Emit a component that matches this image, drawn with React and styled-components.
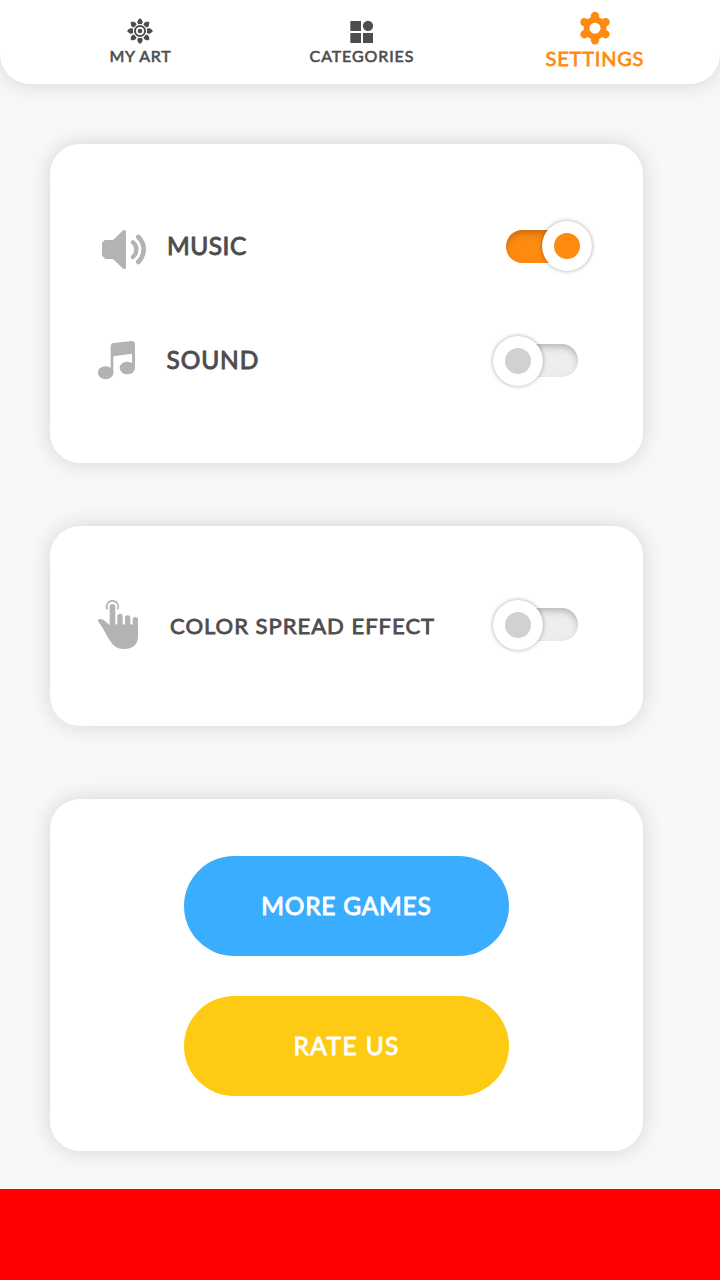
import React from "react";
import styled, { createGlobalStyle } from "styled-components";

const GlobalStyle = createGlobalStyle`
  *, *::before, *::after { box-sizing: border-box; }
  body { margin: 0; background: #f8f8f8; }
`;

const Screen = styled.div`
  display: flex;
  flex-direction: column;
  width: 720px;
  height: 1280px;
  overflow: hidden;
  background: #f8f8f8;
  color: #4d4d4d;
  font-family: Lato, "Liberation Sans", sans-serif;
  font-weight: 400;
`;

const NavBar = styled.nav`
  display: grid;
  grid-template-columns: 280px 163px 303px;
  flex: none;
  height: 84px;
  background: #fff;
  border-radius: 0 0 30px 30px;
  box-shadow: 0 0 22px rgba(0, 0, 0, 0.15);
`;

const NavItem = styled.a`
  display: flex;
  flex-direction: column;
  align-items: center;
  padding-top: ${(p) => (p.$active ? 11 : 18)}px;
  color: ${(p) => (p.$active ? "#ff8a12" : "#4d4d4d")};

  svg {
    display: block;
    flex: none;
    fill: currentColor;
  }
`;

const Caption = styled.span`
  font-size: ${(p) => p.$size}px;
  letter-spacing: ${(p) => p.$spacing}px;
  margin-right: -${(p) => p.$spacing}px;
  padding-top: ${(p) => p.$drop || 0}px;
  line-height: 24px;
  white-space: nowrap;
  -webkit-text-stroke: ${(p) => p.$size * 0.038}px currentColor;
`;

const Content = styled.main`
  flex: 1;
  padding: 60px 77px 0 50px;
`;

const Card = styled.section`
  height: ${(p) => p.$height}px;
  margin-bottom: ${(p) => p.$gap || 0}px;
  padding: ${(p) => p.$top}px 49px 0 48px;
  background: #fff;
  border-radius: 30px;
  box-shadow: 0 0 22px rgba(0, 0, 0, 0.15);
`;

const SettingRow = styled.div`
  display: flex;
  align-items: center;
  height: 113px;
  margin-bottom: 1px;

  > svg {
    display: block;
    flex: none;
    fill: #b3b3b3;
  }
`;

const RowLabel = styled(Caption)`
  flex: 1;
  margin-left: ${(p) => p.$indent}px;
  padding-bottom: ${(p) => p.$lift || 0}px;
`;

const Switch = styled.button`
  display: flex;
  align-items: center;
  flex: none;
  width: 72px;
  height: 33px;
  margin-right: 16px;
  padding: 0;
  border: 0;
  border-radius: 17px;
  background: ${(p) => (p.$on ? "#ff8a12" : "#ededed")};
  box-shadow: inset 0 4px 7px -1px rgba(0, 0, 0, 0.24);
`;

const Knob = styled.span`
  display: grid;
  place-items: center;
  flex: none;
  width: 50px;
  height: 50px;
  margin-left: ${(p) => (p.$on ? 36 : -13)}px;
  margin-top: ${(p) => (p.$on ? -1 : 1)}px;
  border-radius: 50%;
  background: #fff;
  box-shadow: 0 0 4px rgba(0, 0, 0, 0.35);

  &::after {
    content: "";
    width: 26px;
    height: 26px;
    border-radius: 50%;
    background: ${(p) => (p.$on ? "#ff8a12" : "#d1d1d1")};
  }
`;

const Actions = styled.div`
  display: flex;
  flex-direction: column;
  align-items: center;
  gap: 40px;
`;

const PillButton = styled.button`
  display: flex;
  align-items: center;
  justify-content: center;
  width: 325px;
  height: 100px;
  padding: 0;
  border: 0;
  border-radius: 50px;
  background: ${(p) => p.$color};
  color: #fff;
  font: inherit;
`;

const BottomBanner = styled.footer`
  flex: none;
  height: 91px;
  background: #f00;
`;

function FlowerIcon() {
  return (
    <svg width="26" height="26" viewBox="96 40 78 78">
      {[0, 45, 90, 135, 180, 225, 270, 315].map((a) => (
        <path
          key={a}
          d="M135 40.500C139 43 143.500 48 143 53C142 58 139 61 135 61C131 61 128 58 127 53C126.500 48 131 43 135 40.500Z"
          transform={`rotate(${a} 135 79)`}
        />
      ))}
      <circle cx="135" cy="79" r="21" fill="#fff" />
      <circle cx="135" cy="79" r="15" fill="none" stroke="currentColor" strokeWidth="6" />
      <circle cx="135" cy="79" r="7" />
    </svg>
  );
}

function CategoriesIcon() {
  return (
    <svg width="26" height="26" viewBox="147 39 78 78">
      <rect x="151" y="48" width="32" height="30" />
      <circle cx="204" cy="62.500" r="15.500" />
      <rect x="151" y="84" width="32" height="30" />
      <rect x="189" y="84" width="30" height="30" />
    </svg>
  );
}

function GearIcon() {
  return (
    <svg width="34" height="34" viewBox="129.500 33 102 102">
      {[0, 60, 120].map((a) => (
        <path
          key={a}
          d="M180.500 48V121"
          stroke="currentColor"
          strokeWidth="25"
          strokeLinecap="round"
          transform={`rotate(${a} 180.500 84.500)`}
        />
      ))}
      <circle cx="180.500" cy="84.500" r="34" />
      <circle cx="180.500" cy="84.500" r="16.500" fill="#fff" />
    </svg>
  );
}

function SpeakerIcon() {
  return (
    <svg width="50" height="51" viewBox="39 18 150 153">
      <path d="M61 75H82Q85 75 87 73L112 48Q117 43 121 46Q123 48 123 51V156Q123 160 120 162Q116 163 112 159L87 135Q84 132 81 132H63Q60 132 58 129L53 124Q51 122 51 119V87Q51 83 54 80Q57 75 61 75Z" />
      <g fill="none" stroke="#b3b3b3" strokeLinecap="round">
        <path d="M144 82Q154 90 154 103Q154 117 144 126" strokeWidth="13" />
        <path d="M160 66Q176 82 176 103Q176 125 160 141" strokeWidth="14" />
      </g>
    </svg>
  );
}

function NoteIcon() {
  return (
    <svg width="50" height="51" viewBox="39 15 150 153">
      <path d="M77 50Q77 40 87 39L140 33Q150 33 150 43V115H141V71L85 79V128H77Z" />
      <ellipse cx="62" cy="128" rx="23.500" ry="19.500" />
      <ellipse cx="127" cy="114" rx="23" ry="19" />
    </svg>
  );
}

function TouchIcon() {
  return (
    <svg width="50" height="51" viewBox="39 27 150 153">
      <path
        d="M67 58A17.500 17.500 0 1 1 98 58"
        fill="none"
        stroke="#b3b3b3"
        strokeWidth="5"
      />
      <path d="M74 106V51Q74 42 82.500 42Q91 42 91 51V102Q94 106 97 101V79Q97 71 105 71Q113 71 113 79V102Q116 107 120 102V84Q120 76 128 76Q136 76 136 84V102Q139 107 143 102V89Q143 81 151 81Q159 81 159 89V138Q159 157 147 168Q136 177 117 177Q94 177 82 162Q74 152 63 132Q57 120 49 108L40 95Q37 89 43 87Q52 86 60 93Z" />
    </svg>
  );
}

function Toggle({ on, label }) {
  return (
    <Switch $on={on} role="switch" aria-checked={on} aria-label={label}>
      <Knob $on={on} />
    </Switch>
  );
}

export default function App() {
  return (
    <>
      <GlobalStyle />
      <Screen>
        <NavBar>
          <NavItem>
            <FlowerIcon />
            <Caption $size={16} $spacing={0.7}>MY ART</Caption>
          </NavItem>
          <NavItem>
            <CategoriesIcon />
            <Caption $size={16} $spacing={0.9}>CATEGORIES</Caption>
          </NavItem>
          <NavItem $active>
            <GearIcon />
            <Caption $size={20} $spacing={0.8} $drop={1}>SETTINGS</Caption>
          </NavItem>
        </NavBar>
        <Content>
          <Card $height={319} $gap={63} $top={46}>
            <SettingRow>
              <SpeakerIcon />
              <RowLabel $size={24.5} $spacing={0.5} $indent={19} $lift={1}>MUSIC</RowLabel>
              <Toggle on label="Music" />
            </SettingRow>
            <SettingRow>
              <NoteIcon />
              <RowLabel $size={24.5} $spacing={0.9} $indent={18.500} $lift={1}>SOUND</RowLabel>
              <Toggle on={false} label="Sound" />
            </SettingRow>
          </Card>
          <Card $height={200} $gap={73} $top={42}>
            <SettingRow>
              <TouchIcon />
              <RowLabel $size={22} $spacing={1} $indent={22} $drop={3}>COLOR SPREAD EFFECT</RowLabel>
              <Toggle on={false} label="Color spread effect" />
            </SettingRow>
          </Card>
          <Card $height={352} $top={57}>
            <Actions>
              <PillButton $color="#3badff">
                <Caption $size={24.5} $spacing={0.75}>MORE GAMES</Caption>
              </PillButton>
              <PillButton $color="#ffca14">
                <Caption $size={24.5} $spacing={1.4}>RATE US</Caption>
              </PillButton>
            </Actions>
          </Card>
        </Content>
        <BottomBanner />
      </Screen>
    </>
  );
}
